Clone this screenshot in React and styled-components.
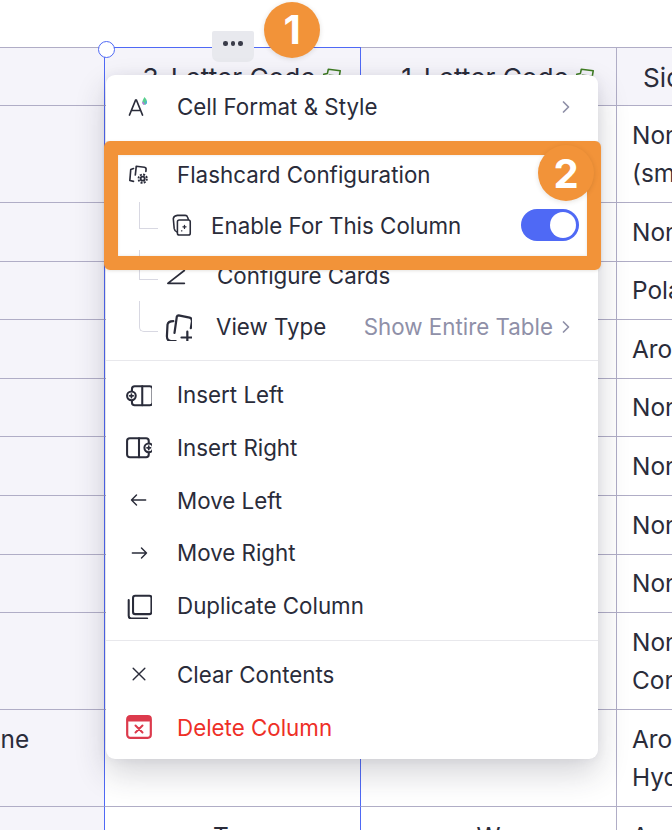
import React from 'react'
import styled, {createGlobalStyle} from 'styled-components'

const GlobalStyle = createGlobalStyle`
  html, body {
    margin: 0;
    padding: 0;
    background: #fff;
    overflow: hidden;
  }
  body {
    font-family: Inter, "Liberation Sans", sans-serif;
    color: #2a2c3a;
  }
`

const LINE = '#b0adc6'
const BLUE = '#4f69f5'
const ORANGE = '#f29339'

const Page = styled.div`
  width: 672px;
  height: 830px;
  overflow: hidden;
  padding-top: 47px;
  box-sizing: border-box;
`

const Stage = styled.div`
  position: relative;
  width: 672px;
`

const Table = styled.div`
  display: grid;
  grid-template-columns: 256px 256px 256px 256px;
  margin-left: -151px;
  width: 1024px;
  border-top: 1px solid ${LINE};
  font-size: 24.4px;
  line-height: 38.55px;
`

const Cell = styled.div`
  box-sizing: border-box;
  padding: 9.5px ${p => p.$wrap ? 120 : 16}px 9.5px 16px;
  border-bottom: 1px solid ${LINE};
  border-right: 1px solid ${p => p.$selected ? BLUE : LINE};
  background: ${p => p.$shaded ? '#f5f4fa' : '#fff'};
  text-align: ${p => p.$center ? 'center' : 'left'};
  white-space: ${p => p.$wrap ? 'normal' : 'nowrap'};
  ${p => p.$first && 'padding-left: 20px;'}
  ${p => p.$last && 'padding-left: 15px;'}
  ${p => p.$head && 'padding-top: 10.825px; padding-bottom: 7.825px; font-size: 26.2px; overflow: hidden;'}
  ${p => p.$head && p.$last && 'padding-left: 26px;'}
`

const SelectedCell = styled(Cell)`
  border-left: 1px solid ${BLUE};
  margin-left: -1px;
  ${p => p.$top && `box-shadow: 0 -1px 0 ${BLUE};`}
`

const HeaderLabel = styled.span`
  display: inline-flex;
  align-items: center;
  gap: 5px;
  margin-left: 20px;
`

const Handle = styled.span`
  position: absolute;
  left: 98px;
  top: -6px;
  width: 15px;
  height: 15px;
  border: 1.5px solid ${BLUE};
  border-radius: 50%;
  background: #fff;
`

const MoreButton = styled.div`
  position: absolute;
  left: 212px;
  top: -16px;
  width: 42px;
  height: 31px;
  display: flex;
  align-items: center;
  justify-content: center;
  gap: 3px;
  padding-bottom: 6px;
  box-sizing: border-box;
  background: #e8e9ee;
  border-radius: 2px 2px 7px 7px;
`

const Dot = styled.i`
  width: 4.5px;
  height: 4.5px;
  border-radius: 50%;
  background: #3a3c49;
`

const Menu = styled.div`
  position: absolute;
  left: 106px;
  top: 28px;
  width: 492px;
  box-sizing: border-box;
  padding: 5.5px 0;
  background: #fff;
  border-radius: 9px;
  box-shadow: 0 14px 32px rgba(40, 40, 60, 0.2), 0 0 12px rgba(40, 40, 60, 0.06);
  font-size: 22.35px;
`

const Divider = styled.div`
  height: 1px;
  margin: ${p => p.$low ? '8px 0 7px' : '7.5px 0'};
  background: #e8e8ec;
`

const Row = styled.div`
  position: relative;
  display: flex;
  align-items: center;
  height: ${p => p.$h || 52.75}px;
  padding: 0 25px 0 ${p => p.$indent || 0}px;
  color: ${p => p.$danger ? '#ee2f27' : 'inherit'};
`

const IconSlot = styled.span`
  flex: none;
  width: 72px;
  margin-right: -1px;
  display: flex;
  justify-content: center;
  padding-right: 6px;
  box-sizing: border-box;
`

const SubIcon = styled.span`
  flex: none;
  width: ${p => p.$w}px;
  display: flex;
  justify-content: center;
`

const Branch = styled.span`
  position: absolute;
  left: 33px;
  top: ${p => p.$top}px;
  height: ${p => p.$h}px;
  width: 18px;
  border-left: 1.5px solid #d8d8e2;
  border-bottom: 1.5px solid #d8d8e2;
  border-bottom-left-radius: ${p => p.$round ? 5 : 0}px;
`

const Label = styled.span`
  flex: 1;
  white-space: nowrap;
  margin-left: ${p => p.$gap || 0}px;
`

const Hint = styled.span`
  color: #8f90a8;
  display: flex;
  align-items: center;
  gap: 6px;
  white-space: nowrap;
`

const Toggle = styled.span`
  flex: none;
  width: 58px;
  height: 32px;
  margin-right: -6px;
  box-sizing: border-box;
  padding: 3px;
  border-radius: 16px;
  background: ${BLUE};
  display: flex;
  justify-content: flex-end;
`

const Knob = styled.span`
  width: 26px;
  height: 26px;
  border-radius: 50%;
  background: #fff;
`

const Highlight = styled.div`
  position: absolute;
  left: 104px;
  top: 94px;
  width: 497px;
  height: 129px;
  box-sizing: border-box;
  border: 14px solid ${ORANGE};
  border-radius: 6px;
  box-shadow: inset 0 0 3px rgba(60, 40, 20, 0.12), 0 1px 3px rgba(60, 40, 20, 0.12);
`

const Badge = styled.div`
  position: absolute;
  left: ${p => p.$x - 28}px;
  top: ${p => p.$y - 75}px;
  width: 56px;
  height: 56px;
  border-radius: 50%;
  background: ${ORANGE};
  color: #fff;
  font-size: 40px;
  font-weight: 700;
  display: flex;
  align-items: center;
  justify-content: center;
  box-shadow: 0 1px 5px rgba(60, 40, 20, 0.14);
`

const Svg = ({size = 24, vb = 24, stroke = '#2a2c3a', sw = 1.9, children}) => (
  <svg width={size} height={size} viewBox={`0 0 ${vb} ${vb}`} fill="none" stroke={stroke} strokeWidth={sw} strokeLinecap="round" strokeLinejoin="round">
    {children}
  </svg>
)

const GreenCards = () => (
  <Svg size={22} stroke="#3f7d22" sw={1.7}>
    <path d="M7 7 L8 2.5 L21 4 L20 10 M7 7 L3 8 L3 20 L8 22 M9 9 L9 22 L18 22 L20 10 Z" />
  </Svg>
)

const FormatIcon = () => (
  <svg width="26" height="26" viewBox="0 0 26 26" fill="none">
    <path d="M3.5 21 L9.6 6 L10.4 6 L16.5 21 M5.4 16.5 L14.6 16.5" stroke="#2a2c3a" strokeWidth="1.7" strokeLinecap="round" />
    <path d="M18.5 3 C19.8 4.6 21 6 21 8 C21 10.2 19.2 11 18 10.7 C16.4 10.3 16 8.6 16.5 7 C16.9 5.6 17.8 4.4 18.5 3 Z" fill="#58cf8e" />
    <path d="M16.4 7.4 C16.1 9.4 17 10.8 18.4 10.8 C18.8 9.3 18 8.2 16.4 7.4 Z" fill="#c46be0" />
    <path d="M19.2 7 C20 8 20 9.5 18.8 10.7 C20.2 10.6 21 9.4 21 8 C20.9 7.5 20.2 7 19.2 7 Z" fill="#4aa8e8" />
  </svg>
)

const FlashcardGearIcon = () => (
  <Svg size={22} sw={1.8}>
    <path d="M6 5 L3 6 L2 18 L6 19 M8 12 L9 2.5 L18 3.5 Q20 4 19.7 6 L19.5 8" />
    <circle cx="16" cy="16" r="4.6" strokeWidth="2" strokeDasharray="2.2 1.4" strokeLinecap="butt" />
    <circle cx="16" cy="16" r="3.2" fill="#2a2c3a" stroke="none" />
    <circle cx="16" cy="16" r="1.2" fill="#fff" stroke="none" />
  </Svg>
)

const EnableCardsIcon = () => (
  <Svg size={26} sw={1.7}>
    <path d="M19 6 L18 3.2 Q17.5 1.5 15.5 1.5 L7 1.5 Q3 2 2.5 5 L3.5 16 Q4 19 7 20" />
    <rect x="7" y="6.5" width="14" height="16.5" rx="2" fill="#fff" />
    <path d="M13 14 L16.4 14 M14.7 12.3 L14.7 15.7 M11.5 18.4 L11.9 18.4" strokeWidth="1.4" />
  </Svg>
)

const PenIcon = () => (
  <Svg size={22} sw={1.9}>
    <path d="M2 20 L20 6 M3 20 L20 20" />
  </Svg>
)

const ViewTypeIcon = () => (
  <Svg size={28} sw={1.9}>
    <path d="M8 7 Q3.5 7 3 10 L2.5 20 Q2.5 24 6 24 L10 24" />
    <path d="M9 17 L11 3 Q11.3 2 12.5 2 L22 4 Q24 4.5 24 7 L23 13" />
    <path d="M20 16 L20 26 M15 21 L25 21" />
  </Svg>
)

const InsertLeftIcon = () => (
  <Svg size={26} sw={1.9}>
    <rect x="5.5" y="4" width="19" height="17.5" rx="2.5" />
    <path d="M15 4 L15 21.5" />
    <circle cx="5" cy="12.8" r="4" fill="#fff" />
    <path d="M3.3 12.8 L6.7 12.8 M5 11.1 L5 14.5" strokeWidth="1.5" />
  </Svg>
)

const InsertRightIcon = () => (
  <Svg size={26} sw={1.9}>
    <rect x="1" y="4" width="20" height="17.5" rx="2.5" />
    <path d="M12 4 L12 21.5" />
    <circle cx="21" cy="12.8" r="4" fill="#fff" />
    <path d="M19.3 12.8 L22.7 12.8 M21 11.1 L21 14.5" strokeWidth="1.5" />
  </Svg>
)

const ArrowLeftIcon = () => (
  <Svg size={20} sw={1.7}>
    <path d="M3 12 L20 12 M9 6 L3 12 L9 18" />
  </Svg>
)

const ArrowRightIcon = () => (
  <Svg size={20} sw={1.7}>
    <path d="M4 12 L21 12 M15 6 L21 12 L15 18" />
  </Svg>
)

const DuplicateIcon = () => (
  <Svg size={26} sw={1.9}>
    <rect x="6.5" y="2.5" width="17" height="17" rx="2" />
    <path d="M2.5 6.5 L2.5 21 Q2.5 23.5 5 23.5 L19.5 23.5" />
  </Svg>
)

const CloseIcon = () => (
  <Svg size={20} sw={1.7}>
    <path d="M5 5 L19 19 M19 5 L5 19" />
  </Svg>
)

const DeleteIcon = () => (
  <svg width="26" height="24" viewBox="0 0 26 24" fill="none">
    <rect x="1.2" y="1.2" width="23.6" height="21.6" rx="3" stroke="#dc3a4c" strokeWidth="2.2" />
    <rect x="1.2" y="1.2" width="23.6" height="5.4" rx="1.5" fill="#dc3a4c" />
    <path d="M9.5 10.5 L16.5 17.5 M16.5 10.5 L9.5 17.5" stroke="#dc3a4c" strokeWidth="2" strokeLinecap="round" />
  </svg>
)

const Chevron = () => (
  <Svg size={14} vb={14} sw={1.7} stroke="currentColor">
    <path d="M4.5 2 L9.5 7 L4.5 12" />
  </Svg>
)

const rows = [
  ['Glycine', 'Gly', 'G', 'Nonpolar (small)', true],
  ['Valine', 'Val', 'V', 'Nonpolar'],
  ['Serine', 'Ser', 'S', 'Polar'],
  ['Tyrosine', 'Tyr', 'Y', 'Aromatic'],
  ['Leucine', 'Leu', 'L', 'Nonpolar'],
  ['Isoleucine', 'Ile', 'I', 'Nonpolar'],
  ['Methionine', 'Met', 'M', 'Nonpolar'],
  ['Alanine', 'Ala', 'A', 'Nonpolar'],
  ['Proline', 'Pro', 'P', 'Nonpolar Conformational', true],
  ['Phenylalanine', 'Phe', 'F', 'Aromatic Hydrophobic', true],
  ['Tryptophan', 'Trp', 'W', 'Aromatic'],
]

export default function App() {
  return (
    <Page>
      <GlobalStyle />
      <Stage>
        <Table>
          <Cell $shaded $head $first>Name</Cell>
          <SelectedCell $shaded $head $selected $top $center>
            <HeaderLabel>3-Letter Code <GreenCards /></HeaderLabel>
          </SelectedCell>
          <Cell $shaded $head $center>
            <HeaderLabel>1-Letter Code <GreenCards /></HeaderLabel>
          </Cell>
          <Cell $shaded $head $last>Side Chain Property</Cell>
          {rows.map(([name, three, one, side, tall]) => (
            <React.Fragment key={name}>
              <Cell $shaded $first>{name}</Cell>
              <SelectedCell $selected $center>{three}</SelectedCell>
              <Cell $center>{one}</Cell>
              <Cell $last $wrap={tall}>{side}</Cell>
            </React.Fragment>
          ))}
        </Table>

        <Handle />
        <MoreButton><Dot /><Dot /><Dot /></MoreButton>

        <Menu>
          <Row>
            <IconSlot><FormatIcon /></IconSlot>
            <Label>Cell Format &amp; Style</Label>
            <Hint><Chevron /></Hint>
          </Row>
          <Divider />
          <Row $h={51}>
            <IconSlot><FlashcardGearIcon /></IconSlot>
            <Label>Flashcard Configuration</Label>
          </Row>
          <Row $h={50} $indent={65}>
            <Branch $top={1.5} $h={26} />
            <SubIcon $w={22}><EnableCardsIcon /></SubIcon>
            <Label $gap={18}>Enable For This Column</Label>
            <Toggle><Knob /></Toggle>
          </Row>
          <Row $h={51} $indent={60}>
            <Branch $top={0} $h={29} />
            <SubIcon $w={22}><PenIcon /></SubIcon>
            <Label $gap={29}>Configure Cards</Label>
          </Row>
          <Row $h={51} $indent={58}>
            <Branch $top={0} $h={29.5} $round />
            <SubIcon $w={28}><ViewTypeIcon /></SubIcon>
            <Label $gap={24}>View Type</Label>
            <Hint>Show Entire Table <Chevron /></Hint>
          </Row>
          <Divider $low />
          <Row>
            <IconSlot><InsertLeftIcon /></IconSlot>
            <Label>Insert Left</Label>
          </Row>
          <Row>
            <IconSlot><InsertRightIcon /></IconSlot>
            <Label>Insert Right</Label>
          </Row>
          <Row>
            <IconSlot><ArrowLeftIcon /></IconSlot>
            <Label>Move Left</Label>
          </Row>
          <Row>
            <IconSlot><ArrowRightIcon /></IconSlot>
            <Label>Move Right</Label>
          </Row>
          <Row>
            <IconSlot><DuplicateIcon /></IconSlot>
            <Label>Duplicate Column</Label>
          </Row>
          <Divider />
          <Row>
            <IconSlot><CloseIcon /></IconSlot>
            <Label>Clear Contents</Label>
          </Row>
          <Row $danger>
            <IconSlot><DeleteIcon /></IconSlot>
            <Label>Delete Column</Label>
          </Row>
        </Menu>

        <Highlight />
        <Badge $x={292} $y={29.5}>1</Badge>
        <Badge $x={566} $y={173}>2</Badge>
      </Stage>
    </Page>
  )
}
